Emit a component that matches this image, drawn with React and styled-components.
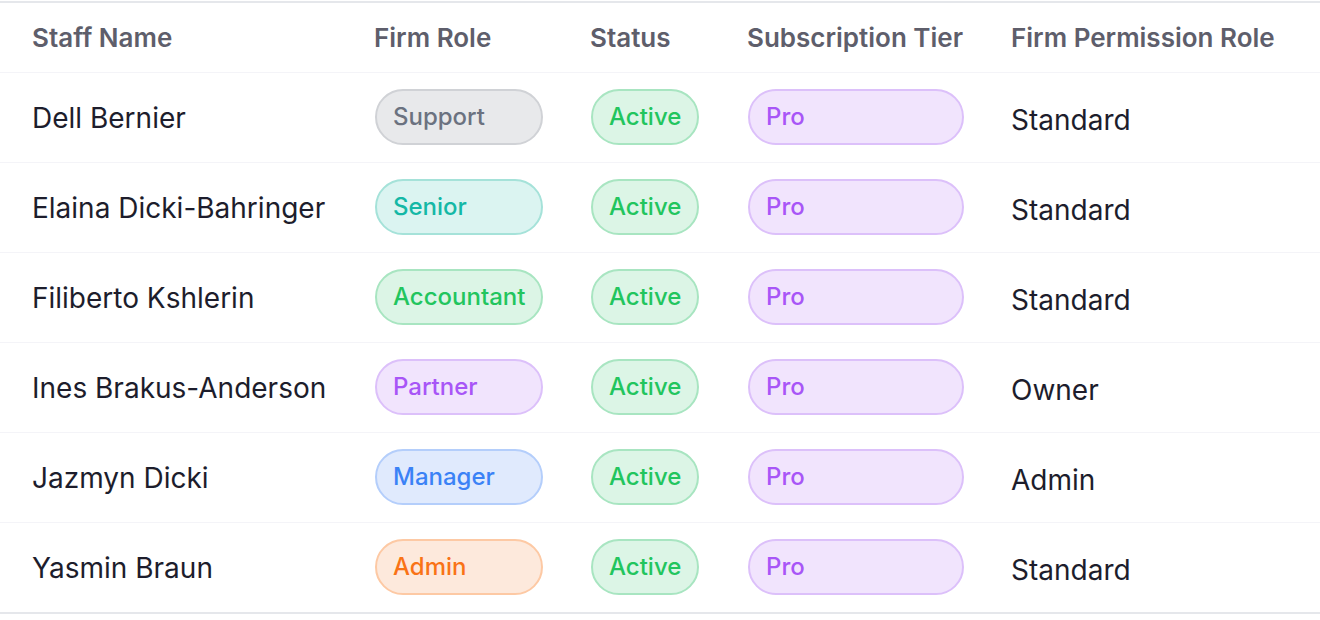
import React from 'react';
import styled, { createGlobalStyle } from 'styled-components';

const GlobalStyle = createGlobalStyle`
    body {
        margin: 0;
        background: #fff;
        font-family: Inter, "Noto Sans", sans-serif;
    }
`;

const tones = {
    gray: { bg: '#e8e9eb', border: '#d0d2d6', color: '#6b7280' },
    teal: { bg: '#dbf4f1', border: '#a5e2d9', color: '#14b8a6' },
    green: { bg: '#dcf5e6', border: '#a8e5c1', color: '#22c55e' },
    purple: { bg: '#f1e4fd', border: '#dcc0fa', color: '#a855f7' },
    blue: { bg: '#e0eafd', border: '#b4cefb', color: '#3b82f6' },
    orange: { bg: '#fde9dc', border: '#fdc9a4', color: '#f97316' },
};

const roleTone = {
    Support: 'gray',
    Senior: 'teal',
    Accountant: 'green',
    Partner: 'purple',
    Manager: 'blue',
    Admin: 'orange',
};

const staff = [
    { name: 'Dell Bernier', role: 'Support', permission: 'Standard' },
    { name: 'Elaina Dicki-Bahringer', role: 'Senior', permission: 'Standard' },
    { name: 'Filiberto Kshlerin', role: 'Accountant', permission: 'Standard' },
    { name: 'Ines Brakus-Anderson', role: 'Partner', permission: 'Owner' },
    { name: 'Jazmyn Dicki', role: 'Manager', permission: 'Admin' },
    { name: 'Yasmin Braun', role: 'Admin', permission: 'Standard' },
];

const columns = '342px 216px 157px 264px 1fr';

const App = () => {
    return (
        <>
            <GlobalStyle />
            <Table>
                <HeaderRow>
                    <HeadCell>Staff Name</HeadCell>
                    <HeadCell>Firm Role</HeadCell>
                    <HeadCell>Status</HeadCell>
                    <HeadCell>Subscription Tier</HeadCell>
                    <HeadCell>Firm Permission Role</HeadCell>
                </HeaderRow>
                {staff.map((item) => (
                    <Row key={item.name}>
                        <Cell>{item.name}</Cell>
                        <Cell $lift>
                            <Badge tone={roleTone[item.role]} $width="168px">
                                {item.role}
                            </Badge>
                        </Cell>
                        <Cell $lift>
                            <Badge tone="green">Active</Badge>
                        </Cell>
                        <Cell $lift>
                            <Badge tone="purple" $width="216px">
                                Pro
                            </Badge>
                        </Cell>
                        <Cell $shift>{item.permission}</Cell>
                    </Row>
                ))}
            </Table>
        </>
    );
};

const Table = styled.div`
    margin-top: 1px;
    border-top: 2px solid #e5e7eb;
    border-bottom: 2px solid #e5e7eb;
    width: 1320px;
`;
const HeaderRow = styled.div`
    display: grid;
    grid-template-columns: ${columns};
    height: 69px;
    align-items: center;
    border-bottom: 1px solid #f4f4f8;
`;
const HeadCell = styled.div`
    padding-left: 32px;
    font-size: 26px;
    font-weight: 600;
    color: #5e5e6b;
    padding-bottom: 1px;
    white-space: nowrap;
`;
const Row = styled.div`
    display: grid;
    grid-template-columns: ${columns};
    height: 89px;
    align-items: center;
    border-bottom: 1px solid #f4f4f8;

    &:last-child {
        border-bottom: none;
    }
`;
const Cell = styled.div`
    padding-left: 32px;
    font-size: 28px;
    color: #1d1d2c;
    margin-top: ${(p) => (p.$shift ? '4px' : '0')};
    margin-bottom: ${(p) => (p.$lift ? '2px' : '0')};
    display: flex;
    align-items: center;
    white-space: nowrap;
`;
const Badge = styled.span`
    box-sizing: border-box;
    display: inline-flex;
    align-items: center;
    height: 56px;
    width: ${(p) => p.$width || 'auto'};
    margin-left: 1px;
    padding: 0 16px;
    border-radius: 999px;
    border: 2px solid ${(p) => tones[p.tone].border};
    background: ${(p) => tones[p.tone].bg};
    color: ${(p) => tones[p.tone].color};
    font-size: 24px;
    font-weight: 500;
`;

export default App;
